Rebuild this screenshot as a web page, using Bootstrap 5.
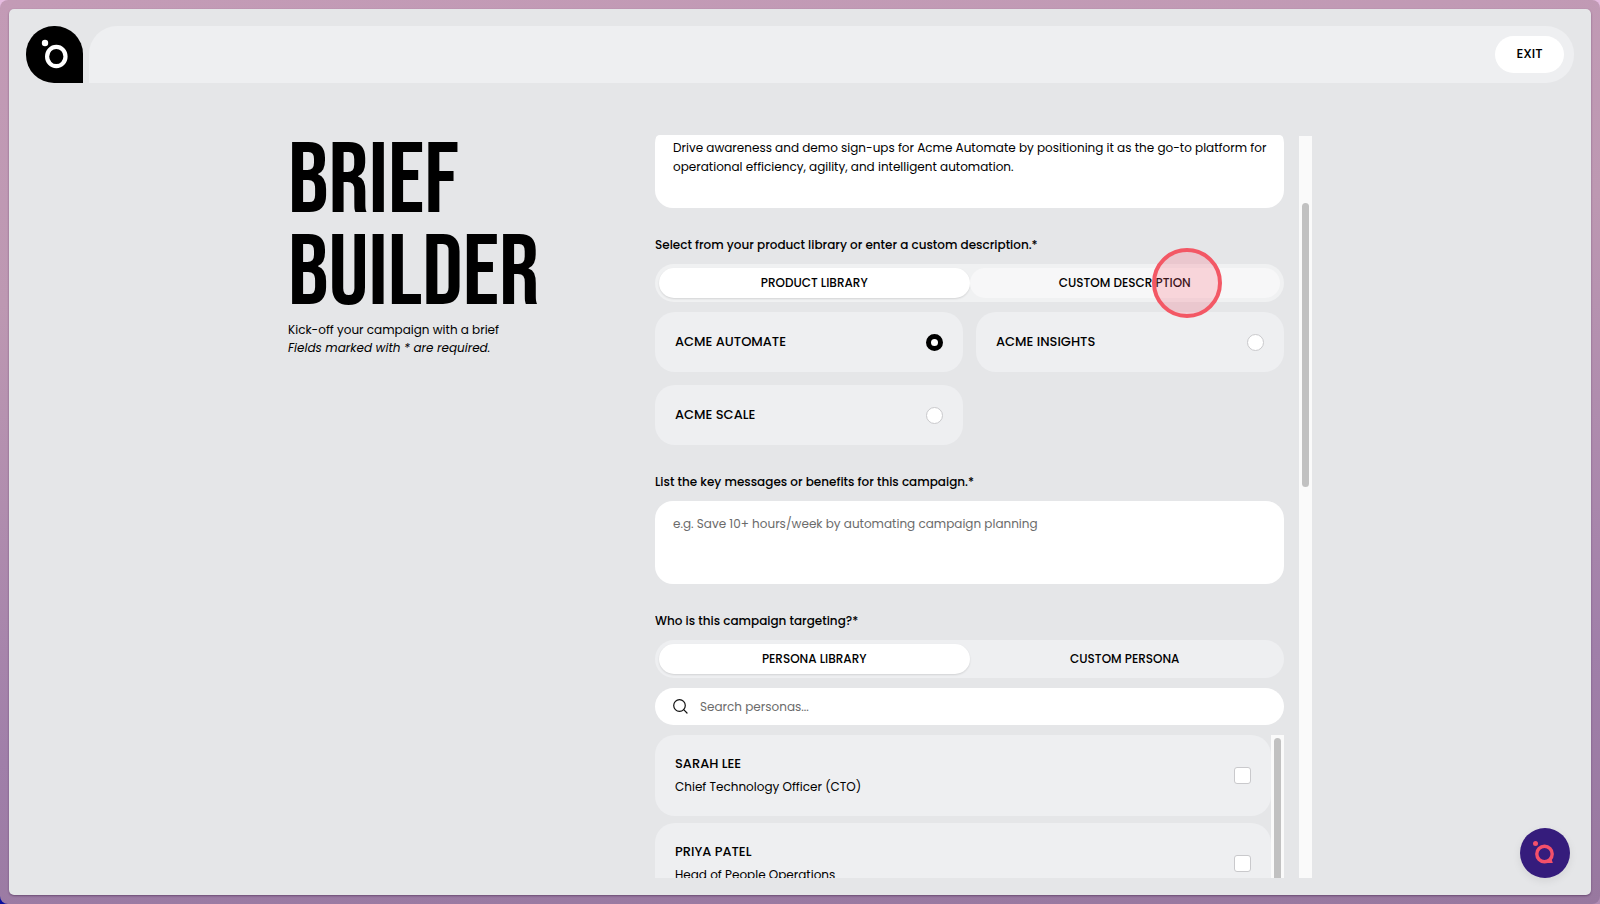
<!DOCTYPE html>
<html lang="en">
<head>
<meta charset="utf-8">
<meta name="viewport" content="width=device-width, initial-scale=1">
<title>Brief Builder</title>
<link href="https://cdn.jsdelivr.net/npm/bootstrap@5.3.0/dist/css/bootstrap.min.css" rel="stylesheet">
<style>
:root { --surface: #e5e6e8; --tile: #eeeff1; --line: #c9c9cc; }
body { font-family: Poppins, Inter, sans-serif; font-size: 12px; line-height: 18px; color: #000; height: 100vh; overflow: hidden;
  background: radial-gradient(circle at 0 100%, #0a10a0 0 12px, transparent 13px), linear-gradient(#e6bce0, #b08cb4); }
.backdrop { height: 100vh; padding: 9px; border-radius: 8px; background: linear-gradient(176deg, #c39bb6, #bd98b2 30%, #a07fa9 75%, #98789f); }
.panel { background: var(--surface); border-radius: 5px; padding: 17px; box-shadow: 0 1px 2px rgba(60, 30, 70, .5); }
.brand { width: 57px; height: 57px; border-radius: 28px 28px 0 28px; background: #000; }
.topbar { background: var(--tile); height: 57px; border-radius: 28px 28px 28px 0; padding: 0 10px; }
.btn-exit { background: #fff; border: 0; border-radius: 19px; width: 69px; height: 37px; font-size: 13px; font-weight: 500; color: #000; padding: 0 0 2px; }
.workspace { width: 100%; max-width: 1024px; margin: 52px auto 0; min-height: 0; }
.title { font-family: "Bebas Neue", "Liberation Sans Narrow", sans-serif; font-weight: 400; font-size: 100px; line-height: 92px; margin: 1px 0; }
.form-pane { flex: 0 0 657px; }
.form-view { overflow: hidden; border-radius: 5px 5px 0 0; }
.brief-form { margin-top: -10px; }
.field { margin-bottom: 27px; }
.field-label { font-weight: 500; line-height: 20px; margin-bottom: 9px; display: block; }
.text-area { display: block; width: 100%; height: 83px; border: 0; border-radius: 18px; padding: 13px 12px 13px 18px; resize: none; background: #fff; color: #000; line-height: 19px; overflow: hidden; }
.text-area::placeholder, .search-input::placeholder { color: #6b6b6b; opacity: 1; }
.switcher { background: var(--tile); border-radius: 19px; padding: 4px; height: 38px; margin-bottom: 10px; }
.switcher button { border: 0; border-radius: 16px; background: transparent; font-size: 12px; font-weight: 500; color: #000; padding: 0; }
.switcher .is-on { background: #fff; box-shadow: 0 1px 2px rgba(0, 0, 0, .12); }
.switcher.is-hovered { background: #f0f1f2; }
.switcher .is-hover { background: #f7f7f8; }
.tap-ring { position: absolute; left: calc(50% + 62px); top: 50%; width: 70px; height: 70px; margin: -35px 0 0 -35px; border-radius: 50%; border: 4px solid #f35865; background: rgba(250, 100, 120, .23); z-index: 2; pointer-events: none; }
.product-grid { display: grid; grid-template-columns: 1fr 1fr; gap: 13px; }
.tile { background: var(--tile); border-radius: 20px; padding: 0 20px; font-size: 13px; font-weight: 500; }
.product { height: 60px; }
.persona { height: 81px; padding-right: 20px; }
.persona small { font-size: 12px; font-weight: 400; line-height: 20px; }
.tick { appearance: none; width: 17px; height: 17px; border: 1px solid var(--line); background: #fff; margin: 0; border-radius: 3px; }
.tick[type=radio] { border-radius: 50%; }
.tick[type=radio]:checked { border: 5px solid #000; }
.search-box { height: 37px; border-radius: 19px; background: #fff; padding: 0 18px; margin-bottom: 10px; }
.search-input { border: 0; outline: 0; background: transparent; padding: 0; }
.persona-list { height: 260px; overflow: hidden; }
.track { width: 13px; background: #fafafa; padding: 0 3px; }
.thumb { background: #c1c1c1; border-radius: 4px; }
.form-track { padding-top: 67px; margin: 1px 0 0 15px; }
.form-track .thumb { height: 284px; }
.list-track { padding-top: 3px; }
.chat { position: absolute; right: 21px; bottom: 17px; width: 50px; height: 50px; border: 0; border-radius: 50%; background: #351c7c; box-shadow: 0 3px 8px rgba(0, 0, 0, .08); padding: 0; }
</style>
</head>
<body>
<div class="backdrop">
  <div class="panel h-100 position-relative d-flex flex-column">
    <header class="d-flex" style="gap:6px">
      <a href="#" class="brand d-block flex-shrink-0" aria-label="Home">
        <svg class="d-block" width="57" height="57" viewBox="0 0 57 57"><circle cx="19" cy="17" r="3.2" fill="#fff"/><ellipse cx="30.300" cy="30.500" rx="9.200" ry="9.700" fill="none" stroke="#fff" stroke-width="4.200"/></svg>
      </a>
      <div class="topbar flex-grow-1 d-flex align-items-center justify-content-end">
        <button class="btn-exit" type="button">EXIT</button>
      </div>
    </header>

    <main class="workspace flex-grow-1 d-flex">
      <section class="flex-grow-1">
        <h1 class="title">BRIEF<br>BUILDER</h1>
        <p class="m-0">Kick-off your campaign with a brief<br><em>Fields marked with * are required.</em></p>
      </section>

      <section class="form-pane d-flex justify-content-between">
        <div class="form-view flex-grow-1">
          <form class="brief-form">
            <div class="field">
              <textarea class="text-area" aria-label="Campaign objective">Drive awareness and demo sign-ups for Acme Automate by positioning it as the go-to platform for operational efficiency, agility, and intelligent automation.</textarea>
            </div>

            <div class="field" role="group" aria-labelledby="product-label">
              <span class="field-label" id="product-label">Select from your product library or enter a custom description.*</span>
              <div class="switcher is-hovered d-flex">
                <button type="button" class="is-on w-50">PRODUCT LIBRARY</button>
                <button type="button" class="is-hover w-50 position-relative">CUSTOM DESCRIPTION<span class="tap-ring"></span></button>
              </div>
              <div class="product-grid">
                <label class="tile product d-flex align-items-center justify-content-between">ACME AUTOMATE<input class="tick" type="radio" name="product" checked></label>
                <label class="tile product d-flex align-items-center justify-content-between">ACME INSIGHTS<input class="tick" type="radio" name="product"></label>
                <label class="tile product d-flex align-items-center justify-content-between">ACME SCALE<input class="tick" type="radio" name="product"></label>
              </div>
            </div>

            <div class="field">
              <label class="field-label" for="messages">List the key messages or benefits for this campaign.*</label>
              <textarea class="text-area" id="messages" placeholder="e.g. Save 10+ hours/week by automating campaign planning"></textarea>
            </div>

            <div role="group" aria-labelledby="persona-label">
              <span class="field-label" id="persona-label">Who is this campaign targeting?*</span>
              <div class="switcher d-flex">
                <button type="button" class="is-on w-50">PERSONA LIBRARY</button>
                <button type="button" class="w-50">CUSTOM PERSONA</button>
              </div>
              <div class="search-box d-flex align-items-center">
                <svg width="15" height="15" viewBox="0 0 15 15" fill="none" stroke="#111" stroke-width="1.200" stroke-linecap="round" class="flex-shrink-0"><circle cx="6.500" cy="6.500" r="5.800"/><path d="M10.700 10.700 14 14"/></svg>
                <input class="search-input flex-grow-1 ms-2 ps-1" type="text" placeholder="Search personas..." aria-label="Search personas">
              </div>
              <div class="persona-list d-flex">
                <div class="flex-grow-1 d-flex flex-column" style="gap:7px">
                  <label class="tile persona flex-shrink-0 d-flex align-items-center justify-content-between"><span class="d-flex flex-column gap-1">SARAH LEE<small>Chief Technology Officer (CTO)</small></span><input class="tick" type="checkbox"></label>
                  <label class="tile persona flex-shrink-0 d-flex align-items-center justify-content-between"><span class="d-flex flex-column gap-1">PRIYA PATEL<small>Head of People Operations</small></span><input class="tick" type="checkbox"></label>
                </div>
                <div class="track list-track"><div class="thumb h-100"></div></div>
              </div>
            </div>
          </form>
        </div>
        <div class="track form-track flex-shrink-0"><div class="thumb"></div></div>
      </section>
    </main>

    <button class="chat" type="button" aria-label="Open assistant">
      <svg class="d-block" width="50" height="50" viewBox="0 0 50 50"><circle cx="15.500" cy="15.500" r="2.500" fill="#f4506a"/><circle cx="24.500" cy="26" r="7.700" fill="none" stroke="#f4506a" stroke-width="3.400"/><path d="M27 32.500 31 29.500 32.800 35H26.500Z" fill="#f4506a"/></svg>
    </button>
  </div>
</div>
<script src="https://cdn.jsdelivr.net/npm/bootstrap@5.3.0/dist/js/bootstrap.bundle.min.js"></script>
</body>
</html>
